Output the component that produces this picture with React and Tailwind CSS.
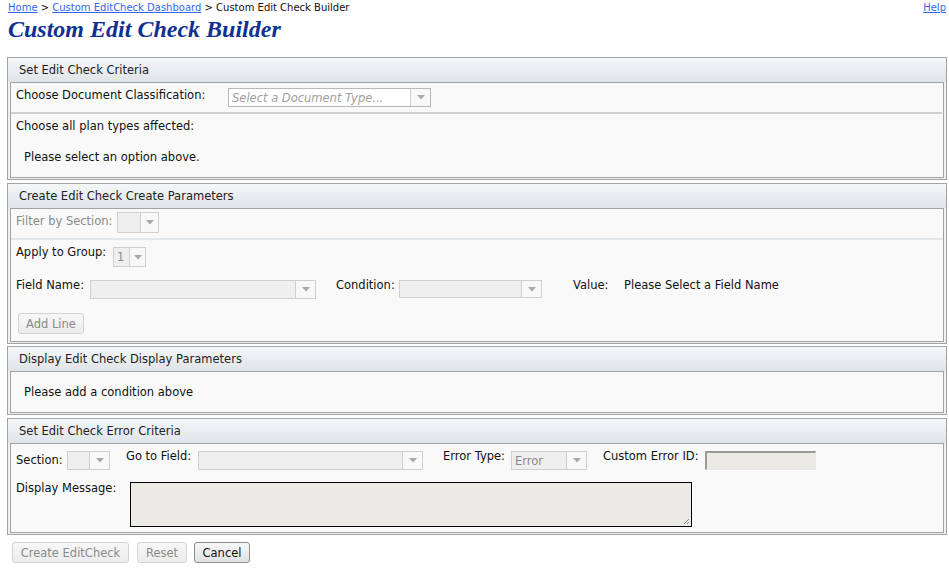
import React from "react";

const font = { fontFamily: '"DejaVu Sans", Verdana, sans-serif' };

function Arrow() {
  return (
    <svg width="8" height="5" viewBox="0 0 8 5">
      <path d="M0 0 L8 0 L4 4.5 Z" fill="#a8a8a8" />
    </svg>
  );
}

function Select({ w, h = 19, text, italic, enabled, arrowW = 19 }) {
  return (
    <div
      className={`flex shrink-0 border ${enabled ? "border-[#b8b8b8] bg-white" : "border-[#cfcfcf] bg-[#efefef]"}`}
      style={{ width: w, height: h }}
    >
      <div className={`flex-1 flex items-center pl-[3px] overflow-hidden whitespace-nowrap ${italic ? "italic text-[#a0a0a0]" : "text-[#8a8a8a]"}`}>
        {text}
      </div>
      <div className="flex items-center justify-center border-l border-[#cfcfcf] bg-[#f8f8f8]" style={{ width: arrowW }}>
        <Arrow />
      </div>
    </div>
  );
}

function Panel({ title, children, h }) {
  return (
    <div className="border border-[#a3a3a3] bg-[#eef1f3]">
      <div className="h-[24px] flex items-center pl-[11px] text-[#222] bg-gradient-to-b from-[#f5f7f8] to-[#dfe4e8]">
        {title}
      </div>
      <div className="mx-[2px] mb-[1px] border border-[#a3a3a3] bg-[#f9f9f9] overflow-hidden" style={{ height: h + 2 }}>
        {children}
      </div>
    </div>
  );
}

const btnDisabled =
  "h-[21px] flex items-center justify-center border border-[#d3d3d3] rounded-[3px] bg-gradient-to-b from-[#f7f7f7] to-[#ececec] text-[#8a8a8a]";

export default function App() {
  return (
    <div className="bg-white w-[949px] h-[571px] text-[11.5px] leading-[16px] text-[#111] overflow-hidden" style={font}>
      <div className="flex justify-between pl-[8px] pr-[3px] pt-[1px] h-[14px] text-[10px] leading-[13px]">
        <div>
          <span className="text-[#3366ee] underline">Home</span>
          <span> &gt; </span>
          <span className="text-[#3366ee] underline">Custom EditCheck Dashboard</span>
          <span> &gt; Custom Edit Check Builder</span>
        </div>
        <span className="text-[#3366ee] underline">Help</span>
      </div>
      <div
        className="pl-[8px] h-[43px] pt-[1px] text-[24px] leading-[28px] font-bold italic text-[#0f3190]"
        style={{ fontFamily: '"Liberation Serif", "Times New Roman", serif' }}
      >
        Custom Edit Check Builder
      </div>

      <div className="ml-[7px] w-[940px] flex flex-col">
        {/* Panel 1 */}
        <Panel title="Set Edit Check Criteria" h={94}>
          <div className="h-[29px] flex items-start pl-[5px]">
            <span className="w-[212px] shrink-0 mt-[4px]">Choose Document Classification:</span>
            <div className="mt-[5px]">
              <Select w={203} h={19} text="Select a Document Type..." italic enabled arrowW={20} />
            </div>
          </div>
          <div className="h-[2px] mr-[1px] bg-[#cfcfcf]" />
          <div className="pl-[5px]">
            <div className="pt-[4px]">Choose all plan types affected:</div>
            <div className="pl-[8px] pt-[15px]">Please select an option above.</div>
          </div>
        </Panel>

        <div className="h-[3px]" />

        {/* Panel 2 */}
        <Panel title="Create Edit Check Create Parameters" h={132}>
          <div className="h-[29px] flex items-start pl-[5px] text-[#8a8a8a]">
            <span className="w-[101px] shrink-0 mt-[4px]">Filter by Section:</span>
            <div className="mt-[3px]">
              <Select w={42} h={21} text="" arrowW={18} />
            </div>
          </div>
          <div className="h-[2px] bg-[#e3e7ea]" />
          <div className="h-[33px] flex items-start pl-[5px]">
            <span className="w-[97px] shrink-0 mt-[4px]">Apply to Group:</span>
            <div className="mt-[7px]">
              <Select w={33} h={20} text="1" arrowW={16} />
            </div>
          </div>
          <div className="h-[34px] flex items-start pl-[5px]">
            <span className="w-[74px] shrink-0 mt-[4px]">Field Name:</span>
            <div className="mt-[7px]">
              <Select w={226} h={19} text="" arrowW={20} />
            </div>
            <span className="ml-[20px] w-[63px] shrink-0 mt-[4px]">Condition:</span>
            <div className="mt-[7px]">
              <Select w={143} h={18} text="" arrowW={20} />
            </div>
            <span className="ml-[31px] w-[51px] shrink-0 mt-[4px]">Value:</span>
            <span className="mt-[4px]">Please Select a Field Name</span>
          </div>
          <div className="pl-[7px] pt-[6px]">
            <div className={`w-[66px] ${btnDisabled}`}>Add Line</div>
          </div>
        </Panel>

        <div className="h-[2px]" />

        {/* Panel 3 */}
        <Panel title="Display Edit Check Display Parameters" h={40}>
          <div className="pl-[13px] pt-[12px]">Please add a condition above</div>
        </Panel>

        <div className="h-[3px]" />

        {/* Panel 4 */}
        <Panel title="Set Edit Check Error Criteria" h={88}>
          <div className="flex items-start pl-[5px] h-[34px]">
            <span className="w-[51px] shrink-0 mt-[8px]">Section:</span>
            <div className="mt-[7px]">
              <Select w={43} h={19} text="" arrowW={20} />
            </div>
            <span className="ml-[16px] w-[72px] shrink-0 mt-[4px]">Go to Field:</span>
            <div className="mt-[7px]">
              <Select w={225} h={19} text="" arrowW={20} />
            </div>
            <span className="ml-[20px] w-[68px] shrink-0 mt-[4px]">Error Type:</span>
            <div className="mt-[7px]">
              <Select w={76} h={19} text="Error" arrowW={20} />
            </div>
            <span className="ml-[16px] w-[102px] shrink-0 mt-[4px]">Custom Error ID:</span>
            <div className="mt-[7px] shrink-0 w-[111px] h-[19px] bg-[#ebeae4] border-t-2 border-l-2 border-[#9a9a9a] border-r border-b border-r-[#e8e8e8] border-b-[#e8e8e8]" />
          </div>
          <div className="flex items-start pl-[5px]">
            <span className="w-[114px] shrink-0 mt-[2px]">Display Message:</span>
            <div className="relative mt-[4px] w-[562px] h-[45px] border border-black bg-[#ebeae4]">
              <svg className="absolute right-[1px] bottom-[1px]" width="7" height="7" viewBox="0 0 7 7">
                <path d="M6 1 L1 6 M6 4 L4 6" stroke="#888" strokeWidth="1" />
              </svg>
            </div>
          </div>
        </Panel>

        <div className="flex pt-[7px] pl-[5px]">
          <div className={`w-[117px] ${btnDisabled}`}>Create EditCheck</div>
          <div className={`ml-[8px] w-[50px] ${btnDisabled}`}>Reset</div>
          <div className="ml-[7px] w-[56px] h-[21px] flex items-center justify-center border border-[#8e8e8e] rounded-[3px] bg-gradient-to-b from-[#f8f8f8] to-[#dfe2e4] text-[#111]">
            Cancel
          </div>
        </div>
      </div>
    </div>
  );
}
